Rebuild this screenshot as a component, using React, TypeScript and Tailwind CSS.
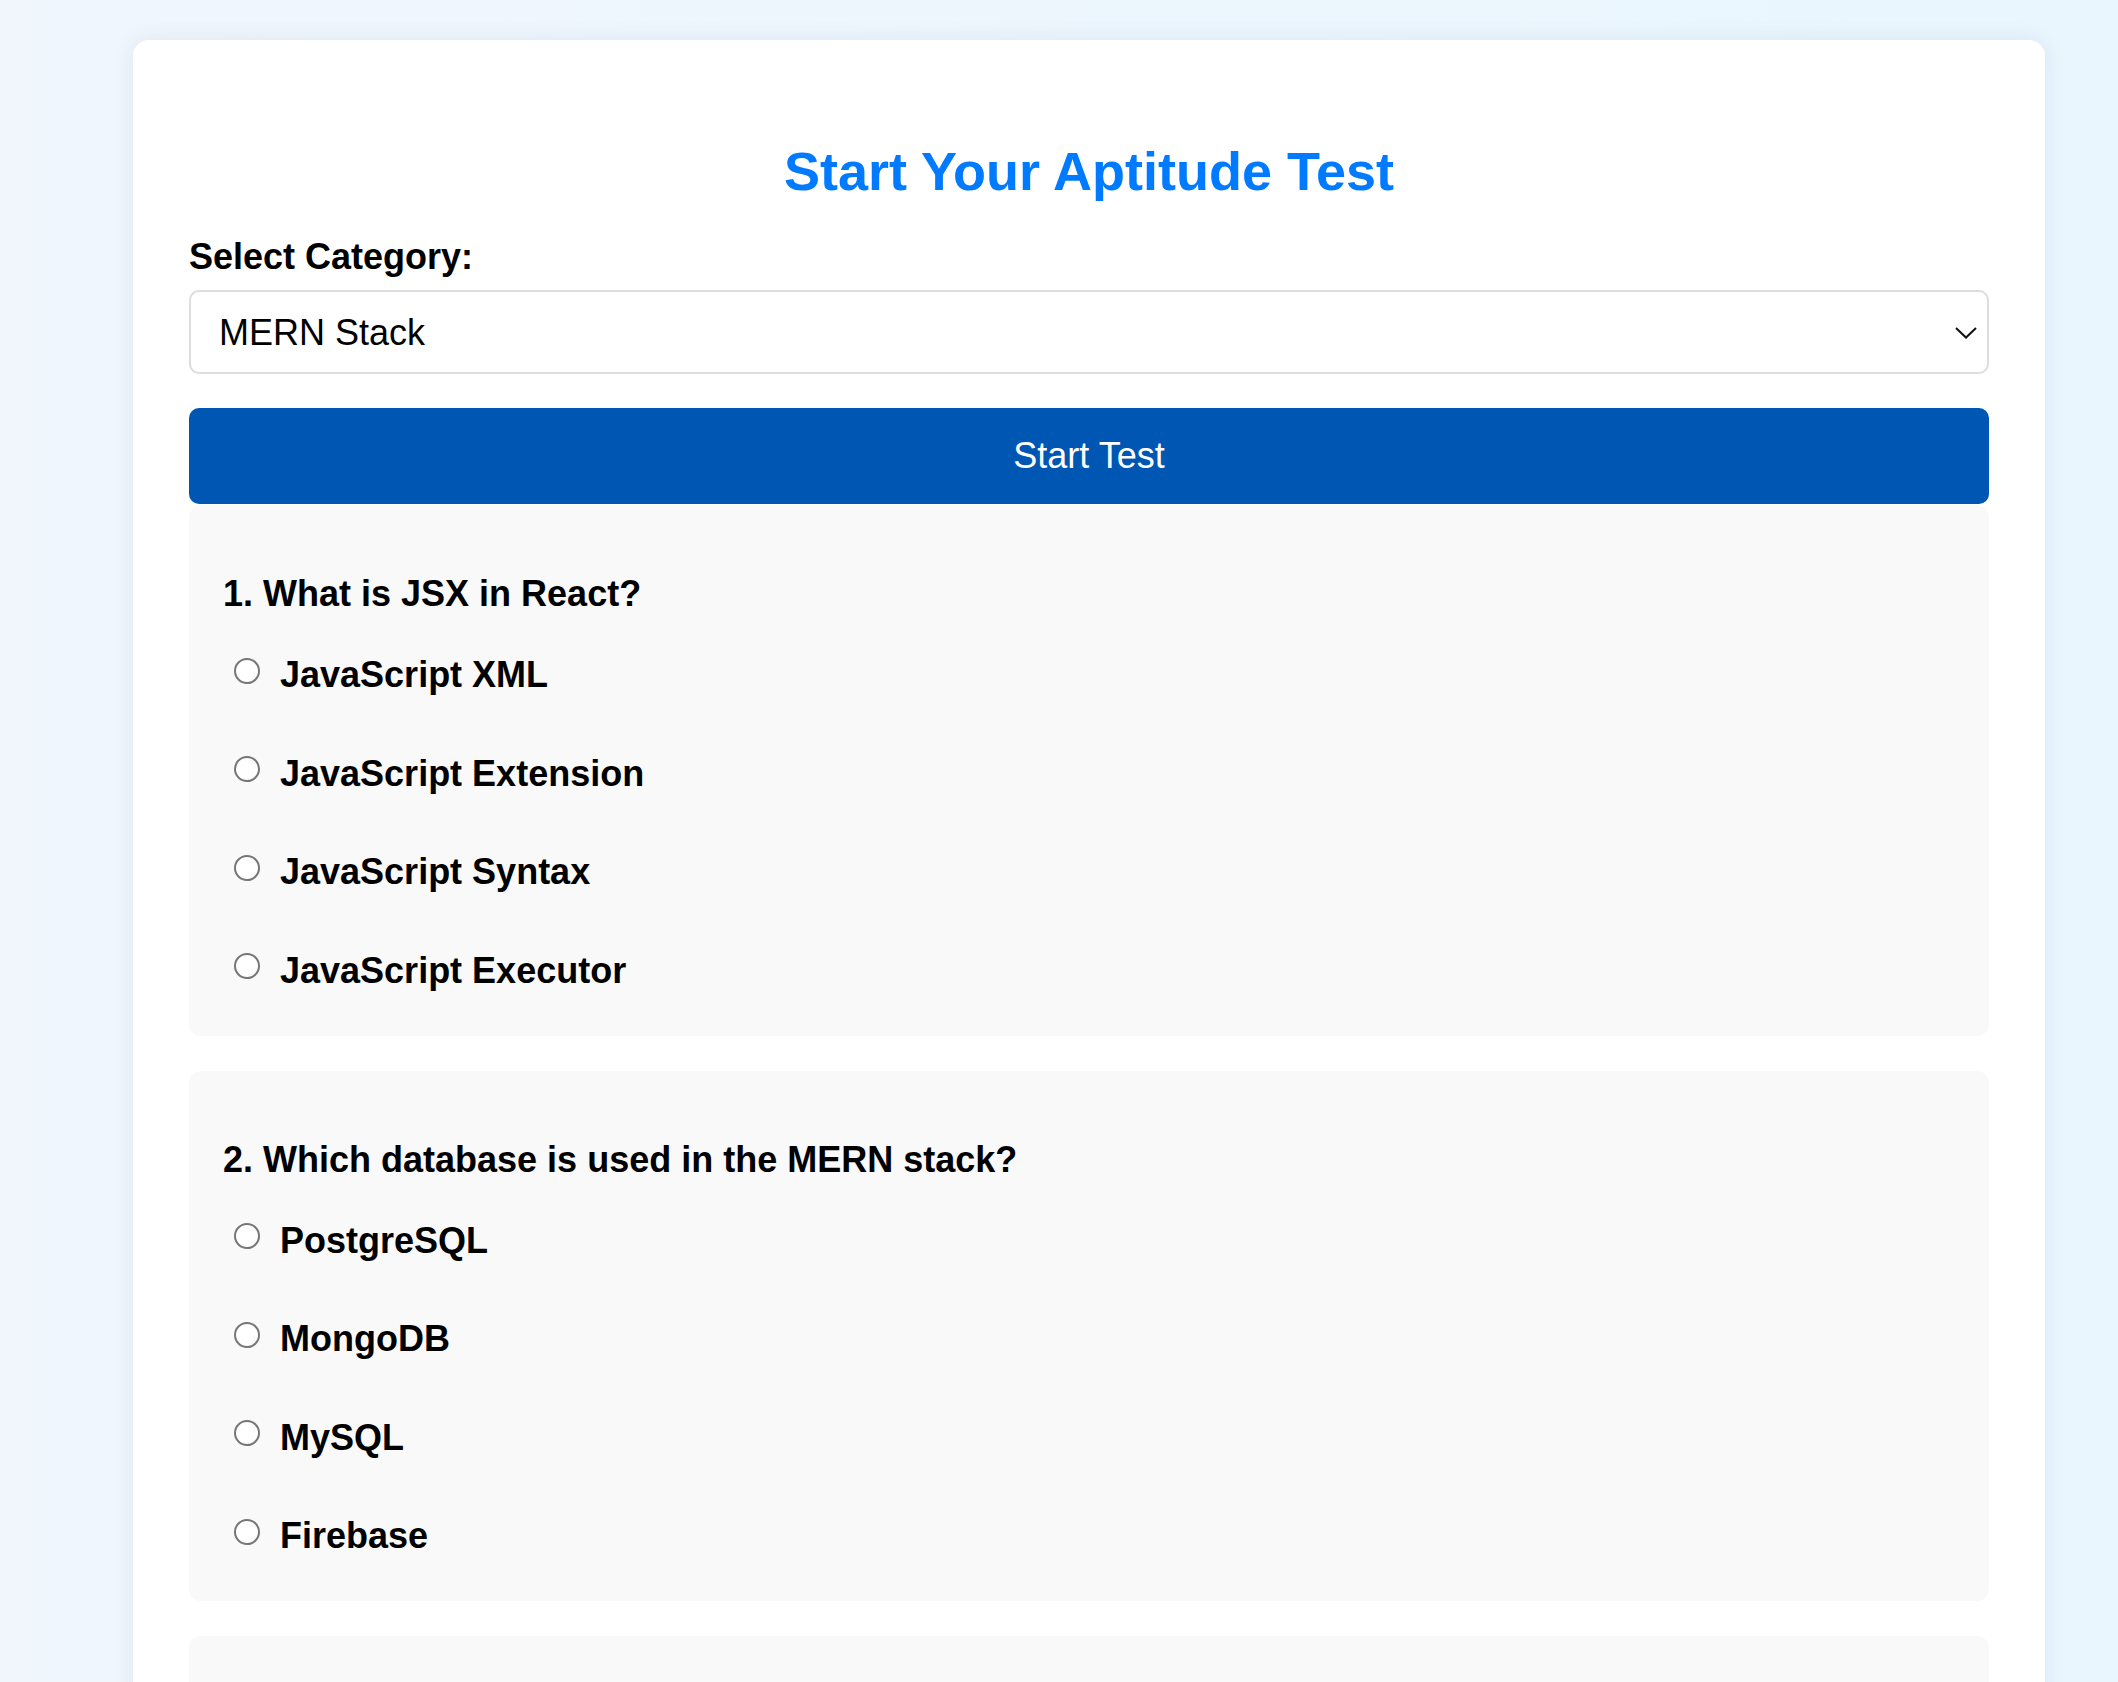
import React from 'react';

const questions = [
  {
    q: 'What is JSX in React?',
    options: ['JavaScript XML', 'JavaScript Extension', 'JavaScript Syntax', 'JavaScript Executor'],
  },
  {
    q: 'Which database is used in the MERN stack?',
    options: ['PostgreSQL', 'MongoDB', 'MySQL', 'Firebase'],
  },
  {
    q: 'What is Express.js used for?',
    options: ['Building server-side APIs', 'Styling pages', 'Managing databases', 'Testing components'],
  },
];

const App = () => {
  const [category, setCategory] = React.useState('mern');
  const [answers, setAnswers] = React.useState<Record<number, string>>({});

  return (
    <div className="min-h-screen bg-gradient-to-r from-[#f1f6fd] to-[#e9f6fe] pt-[40px] pl-[133px] font-['Liberation_Sans',Arial,sans-serif] text-black">
      <div className="w-[1912px] rounded-[16px] bg-white px-[56px] pt-[100px] pb-[40px] shadow-[0_0_22px_rgba(0,40,90,0.08)]">
        <h2 className="text-center text-[54px] font-bold leading-[62px] text-[#007bff]">Start Your Aptitude Test</h2>

        <label className="mt-[34px] block text-[36px] font-bold leading-[41px]">Select Category:</label>
        <div className="relative mt-[13px]">
          <select
            value={category}
            onChange={(e) => setCategory(e.target.value)}
            className="block h-[84px] w-full appearance-none rounded-[10px] border-2 border-[#dddddd] bg-white pl-[28px] text-[36px] leading-[41px] outline-none"
          >
            <option value="mern">MERN Stack</option>
            <option value="python">Python</option>
            <option value="java">Java</option>
          </select>
          <svg
            className="pointer-events-none absolute right-[12px] top-[37px] h-[12px] w-[22px]"
            viewBox="0 0 22 12"
            fill="none"
            stroke="#111"
            strokeWidth="2"
          >
            <polyline points="1,1 11,10.5 21,1" />
          </svg>
        </div>

        <button className="mt-[34px] block h-[96px] w-full rounded-[10px] bg-[#0056b3] text-[36px] text-white">
          Start Test
        </button>

        <div className="mt-[1px] flex flex-col gap-[35px]">
          {questions.map((item, i) => (
            <div key={i} className="rounded-[12px] bg-[#f9f9f9] pl-[34px] pt-[68px] pb-[45px]">
              <h3 className="text-[36px] font-bold leading-[41px]">
                {i + 1}. {item.q}
              </h3>
              <div className="mt-[40px] flex flex-col gap-[57.5px]">
                {item.options.map((opt) => (
                  <label key={opt} className="flex items-center text-[36px] font-bold leading-[41px]">
                    <input
                      type="radio"
                      name={`q${i}`}
                      checked={answers[i] === opt}
                      onChange={() => setAnswers((prev) => ({ ...prev, [i]: opt }))}
                      className="mb-[8px] ml-[11px] mr-[20px] h-[26px] w-[26px] appearance-none rounded-full border-2 border-[#767676] bg-white checked:border-[#0056b3] checked:bg-[#0056b3]"
                    />
                    {opt}
                  </label>
                ))}
              </div>
            </div>
          ))}
        </div>
      </div>
    </div>
  );
};

export default App;
